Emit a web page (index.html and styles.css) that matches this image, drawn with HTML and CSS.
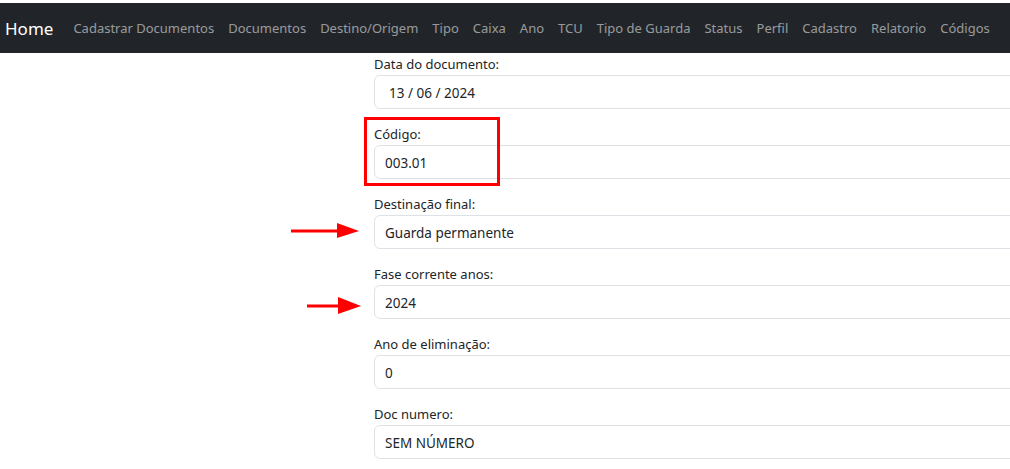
FILE: index.html
```html
<!DOCTYPE html>
<html lang="pt">
<head>
<meta charset="utf-8">
<title>Documento</title>
<link rel="stylesheet" href="styles.css">
</head>
<body>
<nav class="navbar">
  <a class="brand" href="#">Home</a>
  <ul class="nav">
    <li><a href="#">Cadastrar Documentos</a></li>
    <li><a href="#">Documentos</a></li>
    <li><a href="#">Destino/Origem</a></li>
    <li><a href="#">Tipo</a></li>
    <li><a href="#">Caixa</a></li>
    <li><a href="#">Ano</a></li>
    <li><a href="#">TCU</a></li>
    <li><a href="#">Tipo de Guarda</a></li>
    <li><a href="#">Status</a></li>
    <li><a href="#">Perfil</a></li>
    <li><a href="#">Cadastro</a></li>
    <li><a href="#">Relatorio</a></li>
    <li><a href="#">Códigos</a></li>
  </ul>
</nav>
<main class="page">
  <form class="form">
    <div class="group">
      <label class="label">Data do documento:</label>
      <div class="control date">13 / 06 / 2024</div>
    </div>
    <div class="group">
      <label class="label">Código:</label>
      <div class="control">003.01</div>
    </div>
    <div class="group">
      <label class="label">Destinação final:</label>
      <div class="control">Guarda permanente</div>
    </div>
    <div class="group">
      <label class="label">Fase corrente anos:</label>
      <div class="control">2024</div>
    </div>
    <div class="group">
      <label class="label">Ano de eliminação:</label>
      <div class="control">0</div>
    </div>
    <div class="group">
      <label class="label">Doc numero:</label>
      <div class="control">SEM NÚMERO</div>
    </div>
    <span class="highlight"></span>
    <svg class="arrow arrow-1" width="70" height="18" viewBox="0 0 70 18"><line x1="0" y1="9" x2="48" y2="9" stroke="#f00" stroke-width="3"/><polygon points="46,1 68,9 46,16" fill="#f00"/></svg>
    <svg class="arrow arrow-2" width="56" height="18" viewBox="0 0 56 18"><line x1="0" y1="9" x2="34" y2="9" stroke="#f00" stroke-width="3"/><polygon points="31,0 54,9 31,17" fill="#f00"/></svg>
  </form>
</main>
</body>
</html>
```
FILE: styles.css
```css
html, body {
  margin: 0;
  padding: 0;
  background: #fff;
  overflow: hidden;
  width: 1010px;
  height: 469px;
}
body {
  font-family: "Noto Sans", "Open Sans", sans-serif;
  color: #212529;
  font-size: 13px;
}
.navbar {
  margin-top: 3px;
  height: 50px;
  background: #212529;
  display: flex;
  align-items: center;
  padding-left: 5px;
  box-sizing: border-box;
}
.brand {
  color: #fff;
  text-decoration: none;
  font-size: 17px;
  margin-right: 13px;
}
.nav {
  list-style: none;
  margin: 0;
  padding: 0;
  display: flex;
}
.nav a {
  display: block;
  padding: 0 7px;
  color: rgba(255, 255, 255, 0.55);
  text-decoration: none;
  font-size: 13px;
  white-space: nowrap;
}
.page {
  padding-left: 374px;
}
.form {
  position: relative;
  width: 700px;
}
.group {
  display: flex;
  flex-direction: column;
  margin-bottom: 14px;
}
.label {
  display: block;
  line-height: 21px;
  height: 21px;
  padding-top: 1px;
  margin-bottom: 0;
}
.control {
  height: 34px;
  box-sizing: border-box;
  border: 1px solid #dee2e6;
  border-radius: 6px;
  padding: 2px 10px 0;
  display: flex;
  align-items: center;
  line-height: 20px;
  font-size: 13.5px;
}
.control.date {
  padding-left: 14px;
}
.highlight {
  position: absolute;
  left: -10px;
  top: 64px;
  width: 136px;
  height: 69px;
  box-sizing: border-box;
  border: 3px solid #f00;
}
.arrow {
  position: absolute;
}
.arrow-1 {
  left: -83px;
  top: 169px;
}
.arrow-2 {
  left: -67px;
  top: 244px;
}
```
